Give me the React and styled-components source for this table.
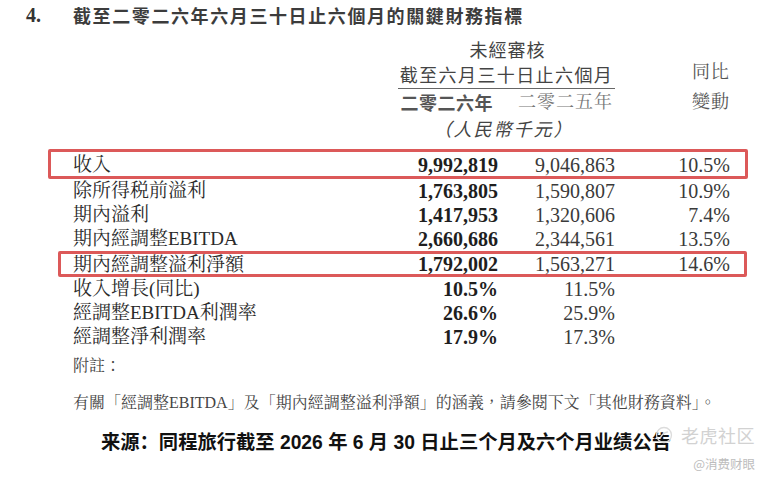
import styled, { createGlobalStyle } from "styled-components";

const SERIF = `"Liberation Serif", "Noto Serif CJK TC", "Noto Sans CJK TC", serif`;
const SANS = `"Noto Sans CJK TC", "Noto Sans", sans-serif`;
const COLS = "327px 98px 117px 115px";

const GlobalStyle = createGlobalStyle`
  body {
    margin: 0;
    background: #fff;
    font-family: ${SERIF};
    color: #262626;
  }
`;

const Page = styled.div`
  position: relative;
  width: 769px;
  height: 480px;
  overflow: hidden;
`;

const TitleBar = styled.div`
  display: flex;
  align-items: center;
  height: 30px;
  padding-left: 26px;
`;

const TitleNo = styled.span`
  width: 47px;
  font-family: ${SERIF};
  font-weight: 700;
  font-size: 20px;
  color: #333;
`;

const TitleText = styled.span`
  font-family: ${SANS};
  font-weight: 700;
  font-size: 18px;
  letter-spacing: 1.6px;
  color: #3c3c3c;
`;

const Head = styled.div`
  display: grid;
  grid-template-columns: ${COLS};
  padding-left: 73px;
  margin-top: 8px;
  font-size: 18px;
  color: #444;
`;

const HeadCell = styled.div`
  grid-column: ${(p) => p.$col};
  grid-row: ${(p) => p.$row};
  text-align: ${(p) => p.$align || "right"};
  line-height: ${(p) => p.$lh || 24}px;
  padding-right: ${(p) => p.$pr || 0}px;
  font-family: ${(p) => (p.$serif ? SERIF : SANS)};
  font-weight: ${(p) => (p.$bold ? 700 : 400)};
  font-style: ${(p) => (p.$italic ? "italic" : "normal")};
  letter-spacing: ${(p) => p.$ls || 0}px;
  color: ${(p) => p.$color || "#444"};
`;

const PeriodCell = styled(HeadCell)`
  border-bottom: 1px solid #666;
  padding-bottom: 2px;
  margin-top: 2px;
  margin-left: -2px;
`;

const Table = styled.div`
  width: 657px;
  padding-left: 73px;
  margin-top: 9px;
`;

const Row = styled.div`
  display: grid;
  grid-template-columns: ${COLS};
  align-items: center;
  line-height: 24px;
  height: ${(p) => p.$h || 24}px;
`;

const BoxRow = styled(Row)`
  height: auto;
  border: 3px solid #dc5959;
  border-radius: 2px;
  margin-left: ${(p) => -p.$left}px;
  padding-left: ${(p) => p.$left - 3}px;
  margin-right: ${(p) => -p.$right}px;
  padding-right: ${(p) => p.$right - 3}px;
  padding-top: ${(p) => p.$pt}px;
  line-height: ${(p) => p.$lh}px;
`;

const Label = styled.div`
  font-family: ${SERIF};
  font-size: 19px;
  color: #2a2a2a;
  white-space: nowrap;
`;

const Num = styled.div`
  text-align: right;
  font-family: ${SERIF};
  font-size: 20px;
  font-weight: ${(p) => (p.$bold ? 700 : 400)};
  color: ${(p) => (p.$bold ? "#1e1e1e" : "#3a3a3a")};
`;

const Note = styled.div`
  padding-left: 73px;
  margin-top: ${(p) => p.$mt}px;
  line-height: 24px;
  font-family: ${SERIF};
  font-size: 16px;
  color: #444;
  white-space: nowrap;
`;

const Source = styled.div`
  margin-top: 16px;
  line-height: 24px;
  text-align: center;
  padding-left: 3px;
  font-family: "Liberation Sans", "Noto Sans CJK SC", sans-serif;
  font-weight: 700;
  font-size: 19.3px;
  color: #111;
  white-space: nowrap;
`;

const Watermark = styled.div`
  position: absolute;
  right: 14px;
  top: 424px;
  display: flex;
  flex-direction: column;
  align-items: flex-end;
  gap: 10px;
  pointer-events: none;
`;

const MarkTop = styled.div`
  display: flex;
  align-items: center;
  gap: 8px;
  font-family: "Noto Sans CJK SC", sans-serif;
  font-size: 18px;
  line-height: 22px;
  color: #d2d2d2;
  letter-spacing: 0.5px;
`;

const MarkSub = styled.div`
  font-family: "Noto Sans CJK SC", sans-serif;
  font-size: 12.5px;
  line-height: 16px;
  color: #bdbdbd;
`;

const rows = [
  ["除所得税前溢利", "1,763,805", "1,590,807", "10.9%"],
  ["期內溢利", "1,417,953", "1,320,606", "7.4%"],
  ["期內經調整EBITDA", "2,660,686", "2,344,561", "13.5%"],
];

const ratios = [
  ["收入增長(同比)", "10.5%", "11.5%"],
  ["經調整EBITDA利潤率", "26.6%", "25.9%"],
  ["經調整淨利潤率", "17.9%", "17.3%"],
];

const TigerMark = () => (
  <svg width="18" height="18" viewBox="0 0 18 18">
    <circle cx="9" cy="9" r="7.5" fill="none" stroke="#dcdcdc" strokeWidth="1.3" />
    <path d="M5.5 11.5 C7 8, 9.5 6.5, 12.5 6" fill="none" stroke="#dcdcdc" strokeWidth="1.3" strokeLinecap="round" />
  </svg>
);

const App = () => {
  return (
    <Page>
      <GlobalStyle />
      <TitleBar>
        <TitleNo>4.</TitleNo>
        <TitleText>截至二零二六年六月三十日止六個月的關鍵財務指標</TitleText>
      </TitleBar>

      <Head>
        <HeadCell $col="2 / 4" $row={1} $align="center" $lh={22} $ls={1}>
          未經審核
        </HeadCell>
        <PeriodCell $col="2 / 4" $row={2} $align="center" $ls={1.4}>
          截至六月三十日止六個月
        </PeriodCell>
        <HeadCell $col={4} $row={2} $serif $ls={1} $color="#555">
          同比
        </HeadCell>
        <HeadCell $col={2} $row={3} $lh={27} $pr={5} $bold $ls={0.5} $color="#555">
          二零二六年
        </HeadCell>
        <HeadCell $col={3} $row={3} $lh={27} $pr={2} $serif $ls={1} $color="#777">
          二零二五年
        </HeadCell>
        <HeadCell $col={4} $row={3} $lh={27} $serif $ls={1} $color="#555">
          變動
        </HeadCell>
        <HeadCell $col="2 / 4" $row={4} $align="center" $pr={8} $italic $ls={2}>
          （人民幣千元）
        </HeadCell>
      </Head>

      <Table>
        <BoxRow $left={25} $right={18} $pt={2} $lh={22}>
          <Label>收入</Label>
          <Num $bold>9,992,819</Num>
          <Num>9,046,863</Num>
          <Num>10.5%</Num>
        </BoxRow>
        {rows.map(([label, a, b, c]) => (
          <Row key={label}>
            <Label>{label}</Label>
            <Num $bold>{a}</Num>
            <Num>{b}</Num>
            <Num>{c}</Num>
          </Row>
        ))}
        <BoxRow $left={15} $right={17} $pt={1} $lh={19}>
          <Label>期內經調整溢利淨額</Label>
          <Num $bold>1,792,002</Num>
          <Num>1,563,271</Num>
          <Num>14.6%</Num>
        </BoxRow>
        {ratios.map(([label, a, b]) => (
          <Row key={label}>
            <Label>{label}</Label>
            <Num $bold>{a}</Num>
            <Num>{b}</Num>
            <Num />
          </Row>
        ))}
      </Table>

      <Note $mt={5}>附註：</Note>
      <Note $mt={13}>
        有關「經調整EBITDA」及「期內經調整溢利淨額」的涵義，請參閱下文「其他財務資料」。
      </Note>
      <Source>来源：同程旅行截至 2026 年 6 月 30 日止三个月及六个月业绩公告</Source>

      <Watermark>
        <MarkTop>
          <TigerMark />
          老虎社区
        </MarkTop>
        <MarkSub>@消费财眼</MarkSub>
      </Watermark>
    </Page>
  );
};

export default App;
